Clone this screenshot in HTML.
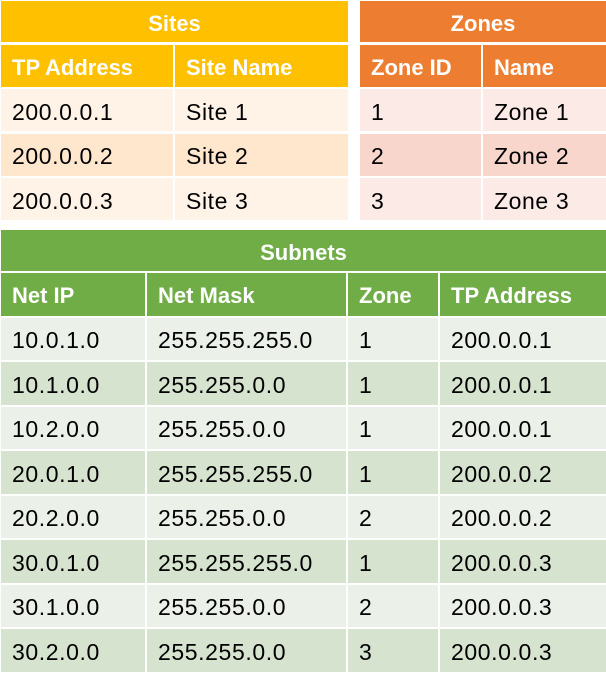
<!DOCTYPE html>
<html><head><style>
html,body{margin:0;padding:0;background:#fff;width:606px;height:673px;overflow:hidden}
body{position:relative;font-family:"Liberation Sans",sans-serif;font-size:23px;letter-spacing:0.6px;color:#000}
.g{position:absolute;display:grid;gap:2px}
.g div{display:flex;align-items:center;padding-left:11px;padding-top:4px;white-space:nowrap}
.t{justify-content:center;padding-left:0!important;color:#fff;font-weight:bold;grid-column:1/-1;font-size:22px;letter-spacing:0}
.h{color:#fff;font-weight:bold;font-size:22px;letter-spacing:0}
</style></head><body>
<div class="g" style="left:1px;top:1px;width:347px;grid-template-columns:172px 173px;grid-template-rows:41px 42px 42px 42px 42px;row-gap:2.5px">
<div class="t" style="background:#FFC000">Sites</div>
<div class="h" style="background:#FFC000">TP Address</div><div class="h" style="background:#FFC000">Site Name</div>
<div style="background:#FFF3E7">200.0.0.1</div><div style="background:#FFF3E7">Site 1</div>
<div style="background:#FFE7CD">200.0.0.2</div><div style="background:#FFE7CD">Site 2</div>
<div style="background:#FFF3E7">200.0.0.3</div><div style="background:#FFF3E7">Site 3</div>
</div>
<div class="g" style="left:360px;top:1px;width:246px;grid-template-columns:121px 123px;grid-template-rows:41px 42px 42px 42px 42px;row-gap:2.5px">
<div class="t" style="background:#ED7D31">Zones</div>
<div class="h" style="background:#ED7D31">Zone ID</div><div class="h" style="background:#ED7D31">Name</div>
<div style="background:#FBEAE6">1</div><div style="background:#FBEAE6">Zone 1</div>
<div style="background:#F8D6CC">2</div><div style="background:#F8D6CC">Zone 2</div>
<div style="background:#FBEAE6">3</div><div style="background:#FBEAE6">Zone 3</div>
</div>
<div class="g" style="left:1px;top:230px;width:605px;grid-template-columns:144px 199px 90px 166px;grid-template-rows:41px repeat(9,42.5px)">
<div class="t" style="background:#70AD47">Subnets</div>
<div class="h" style="background:#70AD47">Net IP</div><div class="h" style="background:#70AD47">Net Mask</div><div class="h" style="background:#70AD47">Zone</div><div class="h" style="background:#70AD47">TP Address</div>
<div style="background:#EBF1E8">10.0.1.0</div><div style="background:#EBF1E8">255.255.255.0</div><div style="background:#EBF1E8">1</div><div style="background:#EBF1E8">200.0.0.1</div>
<div style="background:#D6E4CF">10.1.0.0</div><div style="background:#D6E4CF">255.255.0.0</div><div style="background:#D6E4CF">1</div><div style="background:#D6E4CF">200.0.0.1</div>
<div style="background:#EBF1E8">10.2.0.0</div><div style="background:#EBF1E8">255.255.0.0</div><div style="background:#EBF1E8">1</div><div style="background:#EBF1E8">200.0.0.1</div>
<div style="background:#D6E4CF">20.0.1.0</div><div style="background:#D6E4CF">255.255.255.0</div><div style="background:#D6E4CF">1</div><div style="background:#D6E4CF">200.0.0.2</div>
<div style="background:#EBF1E8">20.2.0.0</div><div style="background:#EBF1E8">255.255.0.0</div><div style="background:#EBF1E8">2</div><div style="background:#EBF1E8">200.0.0.2</div>
<div style="background:#D6E4CF">30.0.1.0</div><div style="background:#D6E4CF">255.255.255.0</div><div style="background:#D6E4CF">1</div><div style="background:#D6E4CF">200.0.0.3</div>
<div style="background:#EBF1E8">30.1.0.0</div><div style="background:#EBF1E8">255.255.0.0</div><div style="background:#EBF1E8">2</div><div style="background:#EBF1E8">200.0.0.3</div>
<div style="background:#D6E4CF">30.2.0.0</div><div style="background:#D6E4CF">255.255.0.0</div><div style="background:#D6E4CF">3</div><div style="background:#D6E4CF">200.0.0.3</div>
</div>
</body></html>
